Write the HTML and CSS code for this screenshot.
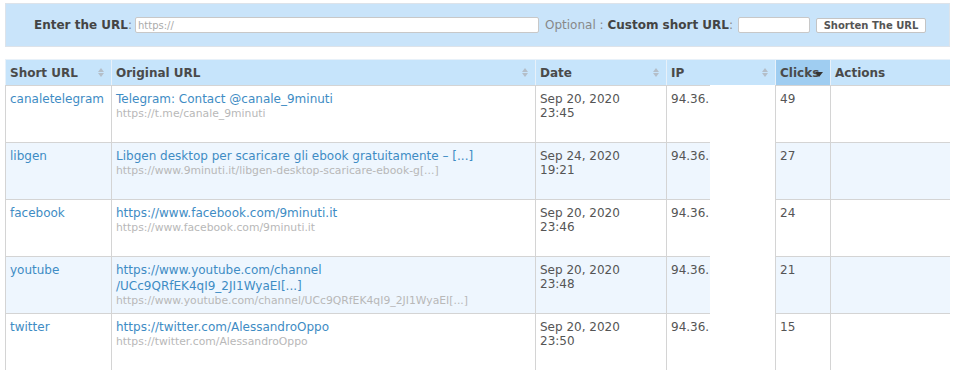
FILE: index.html
```html
<!DOCTYPE html>
<html>
<head>
<meta charset="utf-8">
<link rel="stylesheet" href="styles.css">
</head>
<body>
<form class="shorten">
  <label class="lbl"><b>Enter the URL</b>:</label>
  <input class="url" type="text" placeholder="https://">
  <span class="opt">Optional : <b>Custom short URL</b>:</span>
  <input class="kw" type="text">
  <button class="btn" type="button">Shorten The URL</button>
</form>
<div class="tablewrap">
<table class="links">
  <thead>
    <tr>
      <th class="c-short"><span class="th">Short URL<i class="sort"></i></span></th>
      <th class="c-orig"><span class="th">Original URL<i class="sort"></i></span></th>
      <th class="c-date"><span class="th">Date<i class="sort"></i></span></th>
      <th class="c-ip"><span class="th">IP<i class="sort"></i></span></th>
      <th class="c-clicks sorted"><span class="th">Click<span class="s">s</span><i class="down"></i></span></th>
      <th class="c-act"><span class="th">Actions</span></th>
    </tr>
  </thead>
  <tbody>
    <tr>
      <td><a href="#">canaletelegram</a></td>
      <td><a href="#">Telegram: Contact @canale_9minuti</a><small>https://t.me/canale_9minuti</small></td>
      <td class="date">Sep 20, 2020<br>23:45</td>
      <td>94.36.</td>
      <td>49</td>
      <td></td>
    </tr>
    <tr class="alt">
      <td><a href="#">libgen</a></td>
      <td><a href="#">Libgen desktop per scaricare gli ebook gratuitamente – [...]</a><small>https://www.9minuti.it/libgen-desktop-scaricare-ebook-g[...]</small></td>
      <td class="date">Sep 24, 2020<br>19:21</td>
      <td>94.36.</td>
      <td>27</td>
      <td></td>
    </tr>
    <tr>
      <td><a href="#">facebook</a></td>
      <td><a href="#">https://www.facebook.com/9minuti.it</a><small>https://www.facebook.com/9minuti.it</small></td>
      <td class="date">Sep 20, 2020<br>23:46</td>
      <td>94.36.</td>
      <td>24</td>
      <td></td>
    </tr>
    <tr class="alt">
      <td><a href="#">youtube</a></td>
      <td><a href="#">https://www.youtube.com/channel<br>/UCc9QRfEK4qI9_2JI1WyaEI[...]</a><small>https://www.youtube.com/channel/UCc9QRfEK4qI9_2JI1WyaEI[...]</small></td>
      <td class="date">Sep 20, 2020<br>23:48</td>
      <td>94.36.</td>
      <td>21</td>
      <td></td>
    </tr>
    <tr>
      <td><a href="#">twitter</a></td>
      <td><a href="#">https://twitter.com/AlessandroOppo</a><small>https://twitter.com/AlessandroOppo</small></td>
      <td class="date">Sep 20, 2020<br>23:50</td>
      <td>94.36.</td>
      <td>15</td>
      <td></td>
    </tr>
  </tbody>
</table>
<div class="mask"></div>
</div>
</body>
</html>
```
FILE: styles.css
```css
* { box-sizing: border-box; }
html, body { margin: 0; padding: 0; background: #fff; overflow: hidden; }
body {
  padding: 3px 5px 0 5px;
  font-family: "DejaVu Sans", Verdana, sans-serif;
  font-size: 12px;
  color: #555;
  width: 955px;
  height: 370px;
}
.shorten {
  display: flex;
  align-items: center;
  height: 44px;
  margin: 0;
  padding: 0 0 0 28px;
  background: #c9e4fa;
  border: 1px solid #dde3ea;
}
.lbl { color: #888; font-size: 12px; }
.lbl b, .opt b { color: #444; font-weight: bold; }
.url {
  width: 404px;
  height: 16px;
  margin-left: 3px;
  border: 1px solid #c8c8c8;
  border-radius: 2px;
  background: #fff;
  padding: 0 2px;
  font-family: "DejaVu Sans", Verdana, sans-serif;
  font-size: 10px;
}
.url::placeholder { color: #aaa; }
.opt { color: #888; margin-left: 6px; }
.kw {
  width: 72px;
  height: 16px;
  margin-left: 5px;
  border: 1px solid #c8c8c8;
  border-radius: 2px;
  background: #fff;
}
.btn {
  width: 110px;
  height: 15px;
  margin-left: 6px;
  padding: 0;
  border: 1px solid #c4c4c4;
  border-radius: 2px;
  background: #fff;
  font-family: "DejaVu Sans", Verdana, sans-serif;
  font-size: 10px;
  font-weight: bold;
  color: #555;
  line-height: 13px;
}
.tablewrap {
  position: relative;
  margin-top: 12px;
  height: 311px;
  overflow: hidden;
}
.links {
  width: 945px;
  border-collapse: collapse;
  table-layout: fixed;
  border: 1px solid #d4d4d4;
}
.links th {
  height: 26px;
  background: #c6e4fb;
  text-align: left;
  padding: 0 4px;
  border: 1px solid #e8f1f9;
  border-bottom: 1px solid #d4d4d4;
  font-size: 12px;
  font-weight: bold;
  color: #4a4a4a;
}
.th { display: flex; align-items: center; justify-content: space-between; }
.sort {
  position: relative;
  display: inline-block;
  width: 6px;
  height: 9px;
  margin-right: 3px;
}
.sort::before, .sort::after {
  content: "";
  position: absolute;
  left: 0;
  width: 0; height: 0;
  border-left: 3px solid transparent;
  border-right: 3px solid transparent;
}
.sort::before { top: 0; border-bottom: 4px solid #b4bec8; }
.sort::after { bottom: 0; border-top: 4px solid #b4bec8; }
.links th.sorted { background: #9fcdf1; }
.sorted .th { justify-content: flex-start; }
.sorted .s { margin-right: -4px; }
.down {
  display: inline-block;
  width: 0; height: 0;
  border-left: 4px solid transparent;
  border-right: 4px solid transparent;
  border-top: 5px solid #333;
  margin-top: 3px;
}
.c-short { width: 106px; }
.c-orig { width: 424px; }
.c-date { width: 131px; }
.c-ip { width: 109px; }
.c-clicks { width: 55px; }
.c-act { width: 120px; }
.links td {
  height: 57px;
  vertical-align: top;
  padding: 5px 4px 0 4px;
  border: 1px solid #d4d4d4;
  line-height: 16px;
  color: #555;
  white-space: nowrap;
  overflow: hidden;
}
.links td.date { line-height: 14px; padding-top: 6px; }
.links tr.alt td { background: #eef6fe; }
.links a { color: #3e8cc4; text-decoration: none; }
.links small {
  display: block;
  font-size: 10.8px;
  color: #b8b8b8;
  line-height: 14px;
}
.mask {
  position: absolute;
  left: 705px;
  top: 26px;
  width: 65px;
  bottom: 0;
  background: #fff;
}
```
